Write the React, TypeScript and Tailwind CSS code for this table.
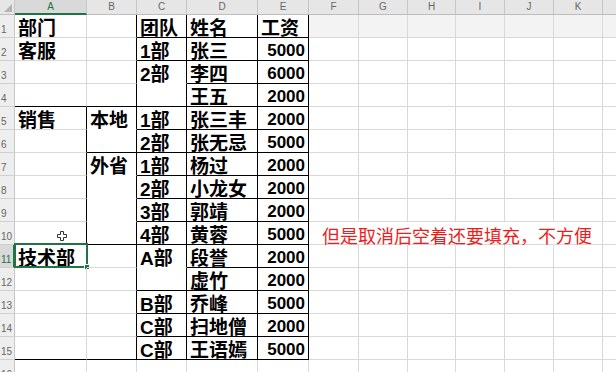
import React from "react";

// column widths A..L (row header is 15px)
const COLS = ["A", "B", "C", "D", "E", "F", "G", "H", "I", "J", "K", ""];
const WIDTHS = [
  "w-[72px]",
  "w-[50px]",
  "w-[50px]",
  "w-[71px]",
  "w-[51px]",
  "w-[50px]",
  "w-[49px]",
  "w-[48px]",
  "w-[49px]",
  "w-[49px]",
  "w-[49px]",
  "w-[14px]",
];

type Line = "k" | "g" | "n";

const RIGHT: Record<Line, string> = {
  k: "border-r-black",
  g: "border-r-[#d9d9d9]",
  n: "border-r-transparent",
};
const BOTTOM: Record<Line, string> = {
  k: "border-b-black",
  g: "border-b-[#d9d9d9]",
  n: "border-b-transparent",
};

const DATA: string[][] = [
  ["部门", "", "团队", "姓名", "工资"],
  ["客服", "", "1部", "张三", "5000"],
  ["", "", "2部", "李四", "6000"],
  ["", "", "", "王五", "2000"],
  ["销售", "本地", "1部", "张三丰", "2000"],
  ["", "", "2部", "张无忌", "5000"],
  ["", "外省", "1部", "杨过", "2000"],
  ["", "", "2部", "小龙女", "2000"],
  ["", "", "3部", "郭靖", "2000"],
  ["", "", "4部", "黄蓉", "5000"],
  ["技术部", "", "A部", "段誉", "2000"],
  ["", "", "", "虚竹", "2000"],
  ["", "", "B部", "乔峰", "5000"],
  ["", "", "C部", "扫地僧", "2000"],
  ["", "", "C部", "王语嫣", "5000"],
  ["", "", "", "", ""],
];

// right edge of cell
const vLine = (r: number, c: number): Line => {
  if (r > 15) return "g";
  if (c >= 1 && c <= 4) return "k";
  if (c === 0 && r >= 5 && r <= 10) return "k";
  if (r === 10 && c >= 5 && c <= 9) return "n";
  return "g";
};

// bottom edge of cell
const hLine = (r: number, c: number): Line => {
  if (r > 15 || c >= 5) return "g";
  if (c >= 2) {
    if (c === 2 && (r === 3 || r === 11)) return "n";
    return "k";
  }
  if (c === 1) {
    if ([4, 6, 10, 15].includes(r)) return "k";
    if ([5, 7, 8, 9].includes(r)) return "n";
    return "g";
  }
  if ([4, 10, 15].includes(r)) return "k";
  return "g";
};

const Cursor = () => (
  <svg
    className="absolute left-[42px] top-[9px]"
    width="10"
    height="10"
    viewBox="0 0 10 10"
  >
    <path
      d="M3.5 .5h3v3h3v3h-3v3h-3v-3h-3v-3h3z"
      fill="white"
      stroke="#333"
      strokeWidth="1"
      strokeLinejoin="round"
    />
  </svg>
);

export default function App() {
  return (
    <div className="w-[616px] h-[372px] overflow-hidden bg-white font-['Liberation_Sans','Noto_Sans_CJK_SC',sans-serif]">
      {/* column headers */}
      <div className="flex h-[15px]">
        <div className="w-[15px] shrink-0 flex items-end justify-end p-[2px] border-r border-b border-r-[#c6c6c6] border-b-[#bdbdbd] bg-[#e6e6e6]">
          <svg width="8" height="8">
            <path d="M8 0V8H0z" fill="#b4b4b4" />
          </svg>
        </div>
        {COLS.map((col, c) => (
          <div
            key={c}
            className={`${WIDTHS[c]} shrink-0 flex items-center justify-center text-[10px] leading-none border-r border-r-[#c6c6c6] ${
              c === 0
                ? "bg-[#d9d9d9] text-[#217346] border-b-2 border-b-[#217346]"
                : "bg-[#e6e6e6] text-[#666] border-b border-b-[#bdbdbd]"
            }`}
          >
            {col}
          </div>
        ))}
      </div>

      {DATA.map((row, i) => {
        const r = i + 1;
        return (
          <div key={r} className="flex h-[23px]">
            <div
              className={`w-[15px] shrink-0 flex items-end pl-[1px] pb-[2px] text-[10px] leading-none border-b border-b-[#d0d0d0] ${
                r === 11
                  ? "bg-[#d9d9d9] text-[#217346] border-r-2 border-r-[#217346]"
                  : "bg-[#eeeeee] text-[#666] border-r border-r-[#c6c6c6]"
              }`}
            >
              {r}
            </div>
            {COLS.map((_, c) => {
              const text = row[c] ?? "";
              const isNum = /^\d+$/.test(text);
              const note = r === 10 && c === 5;
              return (
                <div
                  key={c}
                  className={`relative ${WIDTHS[c]} shrink-0 border-r border-b whitespace-nowrap ${RIGHT[vLine(r, c)]} ${BOTTOM[hLine(r, c)]} ${
                    note
                      ? "pl-[13px] text-[18px] leading-[27px] font-['Noto_Sans_CJK_SC',sans-serif] font-normal text-[#f01c1c] z-10"
                      : isNum
                        ? "text-right pr-[3px] text-[17px] leading-[26px] font-bold text-black"
                        : "pl-[3px] text-[19px] leading-[27px] font-bold text-black"
                  } ${r === 1 && c >= 5 ? "bg-[#f3f3f3]" : ""}`}
                >
                  {note ? "但是取消后空着还要填充，不方便" : text}
                  {r === 10 && c === 0 && <Cursor />}
                  {r === 11 && c === 0 && (
                    <div className="absolute left-[-1px] top-[-2px] w-[74px] h-[25px] border-2 border-[#217346]">
                      <div className="absolute right-[-4px] bottom-[-4px] w-[6px] h-[6px] bg-[#217346] border border-white" />
                    </div>
                  )}
                </div>
              );
            })}
          </div>
        );
      })}
    </div>
  );
}
